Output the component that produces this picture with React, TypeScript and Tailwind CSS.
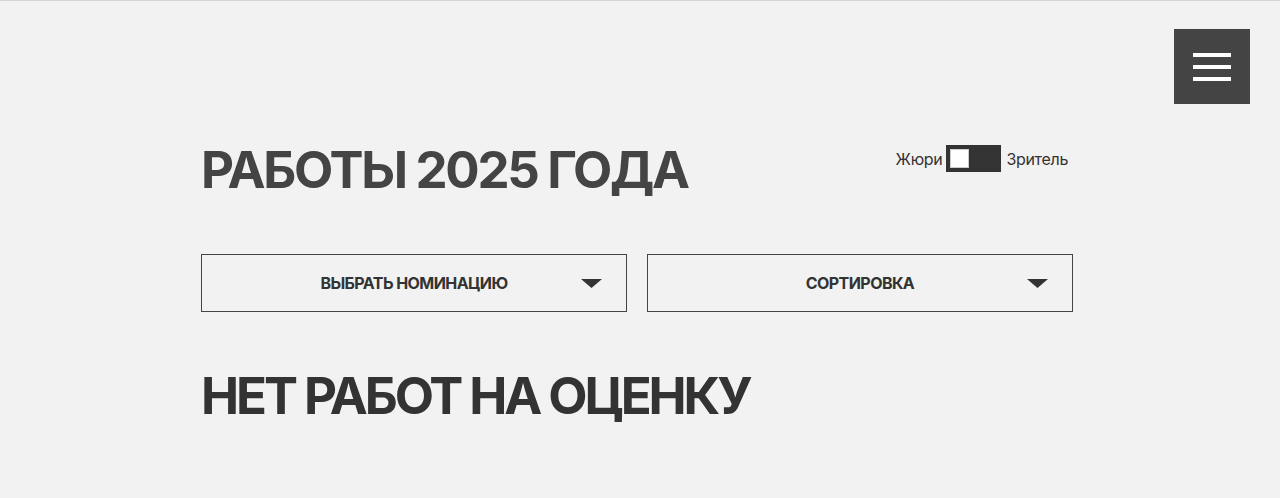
import React, { useState } from 'react';

const Arrow: React.FC = () => (
  <svg width="21" height="9" viewBox="0 0 21 9" className="shrink-0">
    <path d="M0 0 H21 L10.5 9 Z" fill="#333" />
  </svg>
);

const Dropdown: React.FC<{ label: string }> = ({ label }) => (
  <button className="relative flex h-[58px] flex-1 items-center justify-center border border-[#444] bg-transparent">
    <span className="text-[16px] font-bold uppercase tracking-[-0.035em] text-[#333]">{label}</span>
    <span className="absolute right-[24px] top-[24px] flex">
      <Arrow />
    </span>
  </button>
);

export default function App() {
  const [viewer, setViewer] = useState(false);

  return (
    <div
      className="min-h-[498px] border-t border-[#d4d4d4] bg-[#f2f2f2]"
      style={{ fontFamily: 'Inter, "Liberation Sans", sans-serif' }}
    >
      {/* Menu button */}
      <button className="fixed right-[30px] top-[29px] flex h-[75px] w-[76px] flex-col items-center justify-center gap-[8px] bg-[#444]">
        <span className="block h-[4px] w-[38px] bg-white" />
        <span className="block h-[4px] w-[38px] bg-white" />
        <span className="block h-[4px] w-[38px] bg-white" />
      </button>

      <main className="ml-[201px] w-[872px] pt-[143px]">
        <div className="flex items-start justify-between">
          <h1 className="text-[51px] font-bold leading-none tracking-[-0.045em] text-[#444]">
            РАБОТЫ 2025 ГОДА
          </h1>
          <div className="mr-[5px] mt-[1px] flex items-center text-[16px] tracking-[-0.02em] text-[#333]">
            <span>Жюри</span>
            <button
              onClick={() => setViewer(!viewer)}
              className={`ml-[4px] mr-[5px] flex h-[27px] w-[55px] items-center bg-[#333] px-[4px] ${viewer ? 'justify-end' : 'justify-start'}`}
            >
              <span className="block h-[19px] w-[19px] border border-[#ccc] bg-white" />
            </button>
            <span>Зритель</span>
          </div>
        </div>

        <div className="mt-[59px] flex gap-[20px]">
          <Dropdown label="Выбрать номинацию" />
          <Dropdown label="Сортировка" />
        </div>

        <h2 className="mt-[58px] text-[51px] font-bold leading-none tracking-[-0.06em] text-[#333]">
          НЕТ РАБОТ НА ОЦЕНКУ
        </h2>
      </main>
    </div>
  );
}
